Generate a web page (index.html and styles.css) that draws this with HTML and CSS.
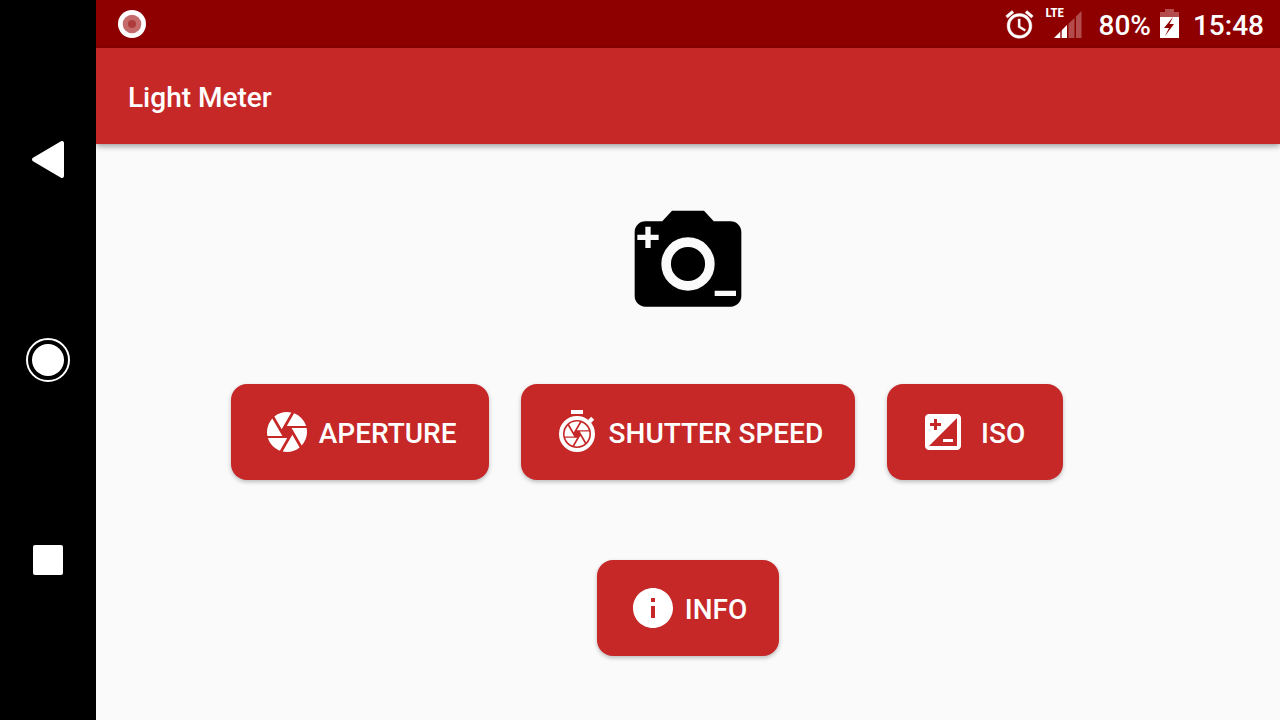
FILE: index.html
```
<!DOCTYPE html>
<html lang="en">
<head>
  <meta charset="UTF-8">
  <meta name="viewport" content="width=device-width, initial-scale=1">
  <title>Light Meter</title>
  <link rel="stylesheet" href="styles.css">
</head>
<body>

  <nav class="navbar">
    <button class="nav-btn" aria-label="Back">
      <svg width="48" height="48" viewBox="0 0 48 48"><path d="M10 23.500L38 7V40z" fill="#fff" stroke="#fff" stroke-width="4" stroke-linejoin="round"/></svg>
    </button>
    <button class="nav-btn" aria-label="Home">
      <svg width="48" height="48" viewBox="0 0 48 48"><circle cx="24" cy="24" r="21" fill="none" stroke="#fff" stroke-width="2"/><circle cx="24" cy="24" r="16" fill="#fff"/></svg>
    </button>
    <button class="nav-btn" aria-label="Recent apps">
      <svg width="48" height="48" viewBox="0 0 48 48"><rect x="9" y="9" width="30" height="30" rx="2" fill="#fff"/></svg>
    </button>
  </nav>

  <div class="screen">
    <div class="status">
      <svg class="notification" width="28" height="28" viewBox="0 0 28 28">
        <circle cx="14" cy="14" r="14" fill="#fff"/>
        <circle cx="14" cy="14" r="9.300" fill="#c66b6b"/>
        <circle cx="14" cy="14" r="4" fill="#ad3c3c"/>
      </svg>
      <svg class="alarm" width="33" height="33" viewBox="0 0 24 24"><path fill="#fff" stroke="#fff" stroke-width=".3" d="M22 5.720l-4.600-3.860-1.290 1.530 4.600 3.860L22 5.720zM7.880 3.390L6.600 1.860 2 5.710l1.290 1.530 4.590-3.850zM12.500 8H11v6l4.750 2.850.75-1.230-4-2.370V8zM12 4c-4.970 0-9 4.030-9 9s4.020 9 9 9c4.970 0 9-4.030 9-9s-4.030-9-9-9zm0 16c-3.870 0-7-3.130-7-7s3.130-7 7-7 7 3.130 7 7-3.130 7-7 7z"/></svg>
      <div class="signal">
        <span class="network">LTE</span>
        <svg width="28" height="28" viewBox="0 0 28 28">
          <path fill="#b34d4d" d="M0 27L27.500 0V27z"/>
          <path fill="#fff" d="M0 27L6 21V27zM8 19L13 14V27H8z"/>
          <path fill="#8e0000" d="M13 14l1.500-1.500V27H13zM20.500 6.500L22 5v22h-1.500z"/>
        </svg>
      </div>
      <span class="percent">80%</span>
      <svg class="battery" width="19" height="30" viewBox="0 0 19 30">
        <path fill="#b34d4d" d="M5 0h9v3h5v6H0V3h5z"/>
        <path fill="#fff" d="M0 8h19v21H0z"/>
        <path fill="#8e0000" d="M13 8L4 19h5l-4 8 9-12H9.500z"/>
      </svg>
      <span class="clock">15:48</span>
    </div>

    <header class="appbar">
      <h1>Light Meter</h1>
    </header>

    <main class="content">
      <svg class="camera" width="128" height="128" viewBox="0 0 24 24">
        <path d="M9 2L7.170 4H4c-1.100 0-2 .9-2 2v12c0 1.100.9 2 2 2h16c1.100 0 2-.9 2-2V6c0-1.100-.9-2-2-2h-3.170L15 2z"/>
        <circle cx="12" cy="12" r="4.100" fill="none" stroke="#fafafa" stroke-width="1.800"/>
        <path fill="#fafafa" d="M4 5h1v1.500h1.500v1H5V9H4V7.500H2.500v-1H4zM17 17h4v1h-4z"/>
      </svg>

      <div class="row">
        <button class="btn">
          <svg width="48" height="48" viewBox="0 0 24 24"><path id="aperture" d="M9.400 10.500l4.770-8.260C13.470 2.090 12.750 2 12 2c-2.400 0-4.600.85-6.320 2.250l3.660 6.350.06-.1zM21.540 9c-.92-2.920-3.150-5.260-6-6.340L11.880 9h9.660zm.26 1h-7.490l.29.500 4.760 8.250C21 16.970 22 14.610 22 12c0-.69-.07-1.350-.2-2zM8.540 12l-3.900-6.750C3.010 7.030 2 9.390 2 12c0 .69.07 1.350.2 2h7.490l-1.150-2zm-6.080 3c.92 2.920 3.150 5.260 6 6.340L12.120 15H2.460zm11.270 0l-3.900 6.760c.7.150 1.420.24 2.170.24 2.400 0 4.600-.85 6.320-2.250l-3.660-6.350-.93 1.600z"/></svg>
          <span>APERTURE</span>
        </button>
        <button class="btn">
          <svg width="48" height="48" viewBox="0 0 24 24">
            <path d="M9 1h6v2H9z"/>
            <path d="M17.500 6l1.600-1.600 1.500 1.500L19 7.500z"/>
            <circle cx="12" cy="13" r="8" fill="none" stroke="#fff" stroke-width="2"/>
            <use href="#aperture" transform="translate(4.560 5.560) scale(.62)"/>
          </svg>
          <span>SHUTTER SPEED</span>
        </button>
        <button class="btn">
          <svg width="48" height="48" viewBox="0 0 24 24">
            <path fill-rule="evenodd" d="M19 3H5c-1.100 0-2 .9-2 2v14c0 1.100.9 2 2 2h14c1.100 0 2-.9 2-2V5c0-1.100-.9-2-2-2zM5.500 7.500h2v-2H9v2h2V9H9v2H7.500V9h-2V7.500zM19 19H5L19 5v14zm-2-2v-1.500h-5V17h5z"/>
          </svg>
          <span>ISO</span>
        </button>
      </div>

      <button class="btn">
        <svg width="48" height="48" viewBox="0 0 24 24"><path d="M12 2C6.480 2 2 6.480 2 12s4.480 10 10 10 10-4.480 10-10S17.520 2 12 2zm1 15h-2v-6h2v6zm0-8h-2V7h2v2z"/></svg>
        <span>INFO</span>
      </button>
    </main>
  </div>

</body>
</html>
```
FILE: styles.css
```
* {
  box-sizing: border-box;
}
body {
  margin: 0;
  min-height: 100vh;
  display: flex;
  font-family: Roboto, sans-serif;
  font-weight: 500;
  font-size: 28px;
  color: #fff;
  background-color: #fafafa;
}
svg {
  display: block;
  flex-shrink: 0;
}
button {
  font: inherit;
  color: inherit;
  border: none;
  cursor: pointer;
}
.navbar {
  width: 96px;
  padding: 60px 0;
  display: flex;
  flex-direction: column;
  align-items: center;
  justify-content: space-around;
  background-color: #000;
}
.nav-btn {
  padding: 0;
  background: none;
}
.screen {
  flex: 1;
  display: flex;
  flex-direction: column;
}
.status {
  height: 48px;
  padding: 0 16px 0 22px;
  display: flex;
  align-items: center;
  background-color: #8e0000;
}
.alarm {
  margin-left: auto;
}
.signal {
  position: relative;
  margin: 0 17px 0 18px;
  padding-top: 2px;
}
.network {
  position: absolute;
  top: -2px;
  left: -8px;
  font-family: "Roboto Condensed", "Liberation Sans Narrow", Roboto, sans-serif;
  font-size: 13px;
  font-weight: 700;
  line-height: 12px;
}
.battery {
  margin: 0 14px 0 9px;
}
.percent,
.clock {
  padding-top: 2px;
}
.appbar {
  height: 96px;
  padding: 2px 32px 0;
  display: flex;
  align-items: center;
  background-color: #c62828;
  box-shadow: 0 2px 6px rgba(0, 0, 0, 0.4);
}
h1 {
  margin: 0;
  font-size: 28px;
  font-weight: 500;
}
.content {
  flex: 1;
  padding: 56px 16px 64px;
  display: flex;
  flex-direction: column;
  align-items: center;
}
.camera {
  margin-bottom: 56px;
}
.row {
  display: flex;
  gap: 32px;
  margin-bottom: 80px;
  padding-right: 82px;
}
.btn {
  height: 96px;
  min-width: 176px;
  padding: 0 32px;
  display: flex;
  align-items: center;
  gap: 8px;
  border-radius: 16px;
  background-color: #c62828;
  box-shadow: 0 2px 4px rgba(0, 0, 0, 0.25);
}
.btn svg {
  fill: #fff;
}
.btn span {
  flex: 1;
  padding-top: 2px;
}
.btn:hover {
  background-color: #b71c1c;
}
```
